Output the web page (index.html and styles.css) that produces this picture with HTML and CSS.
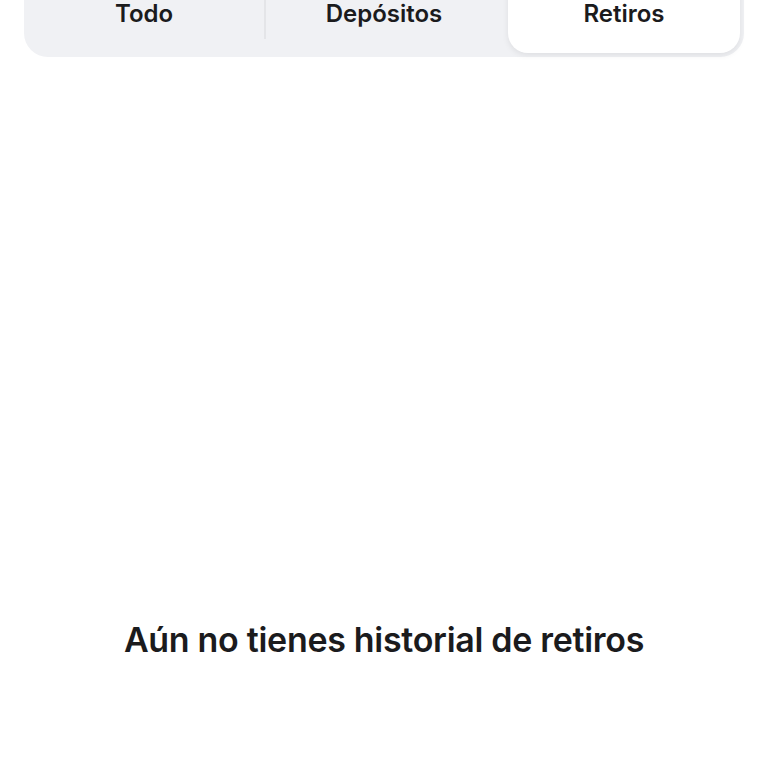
FILE: index.html
```html
<!DOCTYPE html>
<html lang="es">
<head>
    <meta charset="UTF-8">
    <meta name="viewport" content="width=device-width, initial-scale=1.0">
    <title>Historial</title>
    <link rel="stylesheet" href="styles.css">
</head>
<body>
    <div class="tabs">
        <div class="tab">Todo</div>
        <div class="tab divided">Depósitos</div>
        <div class="tab active">Retiros</div>
    </div>
    <div class="empty">
        <h2>Aún no tienes historial de retiros</h2>
    </div>
</body>
</html>
```

FILE: styles.css
```css
body {
    font-family: Inter, "Noto Sans", sans-serif;
    background-color: #fff;
    color: #1b1b1d;
    margin: 0;
    overflow: hidden;
}
.tabs {
    display: grid;
    grid-template-columns: repeat(3, 1fr);
    margin: -31px 24px 0 24px;
    height: 88px;
    background-color: #f0f1f4;
    border-radius: 24px;
}
.tab {
    display: flex;
    justify-content: center;
    align-items: center;
    font-size: 24px;
    font-weight: 600;
    position: relative;
}
.tab.divided::before {
    content: "";
    position: absolute;
    left: 0;
    top: 18px;
    height: 52px;
    width: 2px;
    background-color: #e4e5e8;
}
.tab.active {
    background-color: #fff;
    margin: 0 4px 4px 4px;
    padding-top: 4px;
    border-radius: 20px;
    box-shadow: 0 2px 6px rgba(0,0,0,0.08);
}
.empty {
    text-align: center;
    margin-top: 562px;
}
.empty h2 {
    margin: 0;
    font-size: 34px;
    font-weight: 600;
    line-height: 41px;
    letter-spacing: -0.3px;
}
```
